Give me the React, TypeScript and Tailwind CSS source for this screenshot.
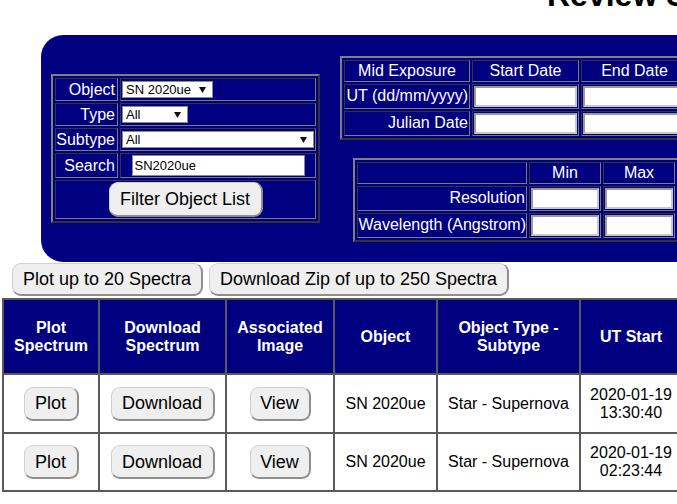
import React from 'react';

const cell =
  'border border-t-[#363636] border-l-[#363636] border-r-[#7c7c7c] border-b-[#7c7c7c] text-white text-[16px] leading-[18px]';
const frame =
  'border-2 border-t-[#7f7f7f] border-l-[#7f7f7f] border-r-[#333333] border-b-[#333333] p-[2px] grid gap-[2px]';

const Arrow = () => (
  <svg width="7" height="7" viewBox="0 0 7 7" className="shrink-0">
    <polygon points="0,1 7,1 3.5,7" fill="#111" />
  </svg>
);

const Select = ({ value, width }: { value: string; width: string }) => (
  <div
    className={`flex h-[17px] items-center justify-between border border-[#8a8a8a] bg-white pl-[3px] pr-[6px] text-[13px] leading-[15px] text-black ${width}`}
  >
    <span>{value}</span>
    <Arrow />
  </div>
);

const Btn = ({ label, size }: { label: string; size: string }) => (
  <button
    className={`flex items-center justify-center rounded-[9px] border border-[#cfcfcf] border-r-2 border-b-2 border-r-[#8e8e8e] border-b-[#8e8e8e] bg-[#efefef] text-[18px] leading-[20px] text-black whitespace-nowrap ${size}`}
  >
    {label}
  </button>
);

const DateBox = () => (
  <div className="h-full w-full border-2 border-t-[#9a9a9a] border-l-[#9a9a9a] border-r-[#c9c9c9] border-b-[#c9c9c9] bg-white" />
);

const rows = [
  { time: '13:30:40' },
  { time: '02:23:44' },
];

const line = 'border-r-2 border-b-2 border-[#5a5a5a]';

export default function App() {
  return (
    <div className="w-full overflow-hidden bg-white font-['Liberation_Sans',Arial,sans-serif]">
      {/* page title, mostly scrolled off above */}
      <div className="h-[35px] overflow-hidden">
        <h1 className="ml-[547px] -mt-[23px] whitespace-nowrap text-[32px] font-bold leading-[37px] text-black">
          Review Spectra
        </h1>
      </div>

      {/* search panel */}
      <div className="ml-[41px] flex h-[227px] w-[900px] items-center gap-[20px] rounded-l-[22px] bg-[#000080] pl-[10px]">
        <div className={`${frame} shrink-0 grid-cols-[63px_196px] grid-rows-[23px_23px_23px_25px_39px]`}>
          <div className={`${cell} flex items-center justify-end pr-[2px]`}>Object</div>
          <div className={`${cell} flex items-center pl-[1px]`}>
            <Select value="SN 2020ue" width="w-[91px]" />
          </div>
          <div className={`${cell} flex items-center justify-end pr-[2px]`}>Type</div>
          <div className={`${cell} flex items-center pl-[1px]`}>
            <Select value="All" width="w-[66px]" />
          </div>
          <div className={`${cell} flex items-center justify-end pr-[2px]`}>Subtype</div>
          <div className={`${cell} flex items-center pl-[1px]`}>
            <Select value="All" width="w-[192px]" />
          </div>
          <div className={`${cell} flex items-center justify-end pr-[2px]`}>Search</div>
          <div className={`${cell} flex items-center justify-center`}>
            <div className="flex h-[21px] w-[173px] items-center border border-[#8a8a8a] bg-white pl-[2px] text-[13px] text-black">
              SN2020ue
            </div>
          </div>
          <div className={`${cell} col-span-2 flex items-center justify-center`}>
            <Btn label="Filter Object List" size="w-[154px] h-[35px]" />
          </div>
        </div>

        <div className="flex w-[352px] shrink-0 flex-col items-center gap-[18px]">
          <div className={`${frame} grid-cols-[126px_107px_107px] grid-rows-[22px_25px_25px]`}>
            <div className={`${cell} flex items-center justify-center`}>Mid Exposure</div>
            <div className={`${cell} flex items-center justify-center`}>Start Date</div>
            <div className={`${cell} flex items-center justify-center`}>End Date</div>
            <div className={`${cell} flex items-center justify-end whitespace-nowrap pr-[1px]`}>UT (dd/mm/yyyy)</div>
            <div className={`${cell} p-[1px]`}><DateBox /></div>
            <div className={`${cell} p-[1px]`}><DateBox /></div>
            <div className={`${cell} flex items-center justify-end pr-[1px]`}>Julian Date</div>
            <div className={`${cell} p-[1px]`}><DateBox /></div>
            <div className={`${cell} p-[1px]`}><DateBox /></div>
          </div>

          <div className={`${frame} grid-cols-[170px_72px_72px] grid-rows-[22px_25px_25px]`}>
            <div className={cell} />
            <div className={`${cell} flex items-center justify-center`}>Min</div>
            <div className={`${cell} flex items-center justify-center`}>Max</div>
            <div className={`${cell} flex items-center justify-end pr-[1px]`}>Resolution</div>
            <div className={`${cell} p-[1px]`}><DateBox /></div>
            <div className={`${cell} p-[1px]`}><DateBox /></div>
            <div className={`${cell} flex items-center justify-end whitespace-nowrap`}>Wavelength (Angstrom)</div>
            <div className={`${cell} p-[1px]`}><DateBox /></div>
            <div className={`${cell} p-[1px]`}><DateBox /></div>
          </div>
        </div>
      </div>

      {/* bulk actions */}
      <div className="ml-[12px] mt-[1px] flex gap-[6px]">
        <Btn label="Plot up to 20 Spectra" size="w-[191px] h-[33px]" />
        <Btn label="Download Zip of up to 250 Spectra" size="w-[300px] h-[33px]" />
      </div>

      {/* results */}
      <div className="ml-[2px] mt-[2px] grid w-max grid-cols-[96px_127px_108px_103px_143px_102px] grid-rows-[75px_59px_58px] border-l-2 border-t-2 border-[#5a5a5a] text-[16px] leading-[18px]">
        {['Plot\nSpectrum', 'Download\nSpectrum', 'Associated\nImage', 'Object', 'Object Type -\nSubtype', 'UT Start'].map((h) => (
          <div
            key={h}
            className={`${line} flex items-center justify-center whitespace-pre-line bg-[#000080] text-center font-bold text-white`}
          >
            {h}
          </div>
        ))}
        {rows.map((r) => (
          <React.Fragment key={r.time}>
            <div className={`${line} flex items-center justify-center`}>
              <Btn label="Plot" size="w-[55px] h-[34px]" />
            </div>
            <div className={`${line} flex items-center justify-center`}>
              <Btn label="Download" size="w-[104px] h-[34px]" />
            </div>
            <div className={`${line} flex items-center justify-center`}>
              <Btn label="View" size="w-[61px] h-[34px]" />
            </div>
            <div className={`${line} flex items-center justify-center text-black`}>SN 2020ue</div>
            <div className={`${line} flex items-center justify-center text-black`}>Star - Supernova</div>
            <div className={`${line} flex flex-col items-center justify-center text-black`}>
              <span>2020-01-19</span>
              <span>{r.time}</span>
            </div>
          </React.Fragment>
        ))}
      </div>
    </div>
  );
}
